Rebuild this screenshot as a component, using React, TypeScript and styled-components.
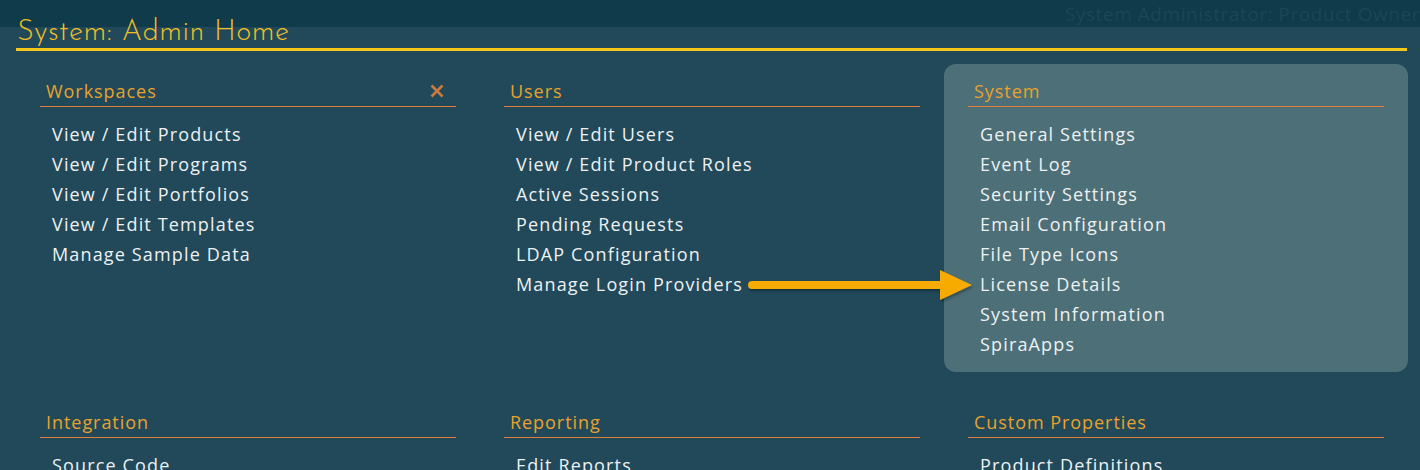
import React from "react";
import styled, { createGlobalStyle } from "styled-components";

const Global = createGlobalStyle`
  html, body { margin: 0; padding: 0; background: #21495a; overflow: hidden; }
  body { font-family: "Open Sans", "Noto Sans", sans-serif; }
`;

const Page = styled.div`
  width: 1420px;
  height: 470px;
  position: relative;
  overflow: hidden;
  background: #21495a;
`;

const TopBar = styled.div`
  height: 27px;
  background: #0f3b4a;
  display: flex;
  justify-content: flex-end;
  align-items: center;
  overflow: hidden;
  white-space: nowrap;
`;

const UserRole = styled.span`
  font-size: 19px;
  color: #1b4756;
  letter-spacing: 0.55px;
`;

const TitleBar = styled.div`
  margin: 0 13px 0 16px;
  height: 21px;
  border-bottom: 3px solid #f6c71b;
  position: relative;
`;

const Title = styled.h1`
  position: absolute;
  left: 1px;
  top: -9px;
  margin: 0;
  font-family: "Josefin Sans", "Lato", sans-serif;
  font-weight: 300;
  font-size: 29px;
  color: #f0c027;
  letter-spacing: 0.45px;
`;

const Grid = styled.div`
  display: grid;
  grid-template-columns: repeat(3, 464px);
  row-gap: 23px;
  padding: 13px 0 0 16px;
`;

const Panel = styled.section<{ $active?: boolean }>`
  background: ${(p) => (p.$active ? "#4d6f77" : "transparent")};
  border-radius: 12px;
  padding: 11px 24px 15px;
  height: 308px;
  box-sizing: border-box;
`;

const Header = styled.div`
  display: flex;
  justify-content: space-between;
  align-items: center;
  border-bottom: 1px solid #e07f35;
  height: 31px;
  padding: 0 6px;
`;

const HeaderText = styled.h2`
  margin: 0;
  font-size: 18px;
  font-weight: 400;
  color: #e9a22b;
  letter-spacing: 0.95px;
`;

const Close = styled.span`
  display: flex;
  color: #c97a3c;
  margin-right: 6px;
`;

const List = styled.ul`
  list-style: none;
  margin: 0;
  padding: 12px 0 0 12px;
`;

const Item = styled.li`
  height: 30px;
  line-height: 30px;
  font-size: 18px;
  color: #eef1f2;
  letter-spacing: 1.15px;
  white-space: nowrap;
`;

const Arrow = styled.svg`
  position: absolute;
  left: 744px;
  top: 268px;
  overflow: visible;
`;

const sections: { title: string; items: string[]; active?: boolean; close?: boolean }[] = [
  {
    title: "Workspaces",
    close: true,
    items: [
      "View / Edit Products",
      "View / Edit Programs",
      "View / Edit Portfolios",
      "View / Edit Templates",
      "Manage Sample Data",
    ],
  },
  {
    title: "Users",
    items: [
      "View / Edit Users",
      "View / Edit Product Roles",
      "Active Sessions",
      "Pending Requests",
      "LDAP Configuration",
      "Manage Login Providers",
    ],
  },
  {
    title: "System",
    active: true,
    items: [
      "General Settings",
      "Event Log",
      "Security Settings",
      "Email Configuration",
      "File Type Icons",
      "License Details",
      "System Information",
      "SpiraApps",
    ],
  },
  { title: "Integration", items: ["Source Code"] },
  { title: "Reporting", items: ["Edit Reports"] },
  { title: "Custom Properties", items: ["Product Definitions"] },
];

export default function App() {
  return (
    <Page>
      <Global />
      <TopBar>
        <UserRole>System Administrator: Product Owner</UserRole>
      </TopBar>
      <TitleBar>
        <Title>System: Admin Home</Title>
      </TitleBar>
      <Grid>
        {sections.map((s) => (
          <Panel key={s.title} $active={s.active}>
            <Header>
              <HeaderText>{s.title}</HeaderText>
              {s.close && (
                <Close>
                  <svg width="14" height="14" viewBox="0 0 14 14">
                    <path d="M1.5 1.5 L12.5 12.5 M12.5 1.5 L1.5 12.5" stroke="currentColor" strokeWidth="2.6" />
                  </svg>
                </Close>
              )}
            </Header>
            <List>
              {s.items.map((i) => (
                <Item key={i}>{i}</Item>
              ))}
            </List>
          </Panel>
        ))}
      </Grid>
      <Arrow width="230" height="34" viewBox="0 0 230 34">
        <defs>
          <filter id="sh" x="-10%" y="-50%" width="120%" height="200%">
            <feDropShadow dx="1" dy="2" stdDeviation="1.5" floodColor="#000" floodOpacity="0.35" />
          </filter>
        </defs>
        <g filter="url(#sh)">
          <line x1="8" y1="17" x2="200" y2="17" stroke="#f7aa06" strokeWidth="8" strokeLinecap="round" />
          <polygon points="196,2 228,17 196,32" fill="#f7aa06" />
        </g>
      </Arrow>
    </Page>
  );
}
